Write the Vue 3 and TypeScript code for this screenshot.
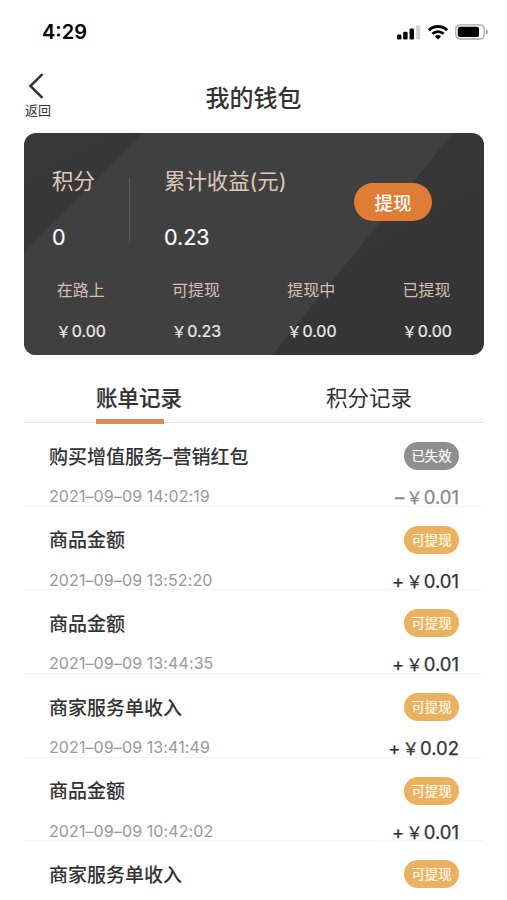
<script setup lang="ts">
interface Stat { label: string; value: string }
interface Bill { title: string; time: string; sign: string; amount: string; status: string; expired?: boolean }

const stats: Stat[] = [
  { label: '在路上', value: '0.00' },
  { label: '可提现', value: '0.23' },
  { label: '提现中', value: '0.00' },
  { label: '已提现', value: '0.00' },
]

const bills: Bill[] = [
  { title: '购买增值服务–营销红包', time: '2021–09–09 14:02:19', sign: '–', amount: '0.01', status: '已失效', expired: true },
  { title: '商品金额', time: '2021–09–09 13:52:20', sign: '+', amount: '0.01', status: '可提现' },
  { title: '商品金额', time: '2021–09–09 13:44:35', sign: '+', amount: '0.01', status: '可提现' },
  { title: '商家服务单收入', time: '2021–09–09 13:41:49', sign: '+', amount: '0.02', status: '可提现' },
  { title: '商品金额', time: '2021–09–09 10:42:02', sign: '+', amount: '0.01', status: '可提现' },
  { title: '商家服务单收入', time: '', sign: '', amount: '', status: '可提现' },
]
</script>

<template>
  <div class="screen">
    <div class="status-bar">
      <span class="clock">4:29</span>
      <div class="indicators">
        <svg class="signal" width="24" height="16" viewBox="0 0 24 16">
          <rect x="0" y="10.4" width="4.4" height="5.2" rx="1.3" />
          <rect x="6.2" y="7.8" width="4.4" height="7.8" rx="1.3" />
          <rect x="12.6" y="4.4" width="4.4" height="11.2" rx="1.3" />
          <rect x="19.2" y="1.2" width="4" height="14.4" rx="1.3" fill="#d2d2d2" />
        </svg>
        <svg class="wifi" width="22" height="16" viewBox="0 0 22 16">
          <path d="M1.9 6.2a13.2 13.2 0 0 1 18.2 0" fill="none" stroke="#000" stroke-width="2.9" />
          <path d="M5.4 9.8a8.2 8.2 0 0 1 11.2 0" fill="none" stroke="#000" stroke-width="2.7" />
          <path d="M11 15.6 7.9 12.5a4.5 4.5 0 0 1 6.2 0Z" />
        </svg>
        <svg class="battery" width="34" height="16" viewBox="0 0 34 16">
          <rect x=".8" y=".8" width="28.4" height="14.2" rx="4.2" fill="#fff" stroke="#a8a8a8" stroke-width="1.3" />
          <rect x="2.8" y="2.7" width="21.2" height="10.4" rx="2.2" />
          <path d="M31 5.3c2.7.8 2.7 4.4 0 5.2Z" fill="#a8a8a8" />
        </svg>
      </div>
    </div>

    <header class="nav">
      <div class="back">
        <svg width="18" height="28" viewBox="0 0 18 28">
          <path d="M15.5 2.2 3.4 14l12.1 11.8" fill="none" stroke="#333" stroke-width="2.5" />
        </svg>
        <span>返回</span>
      </div>
      <h1>我的钱包</h1>
      <div />
    </header>

    <section class="card">
      <svg class="sheen" viewBox="0 0 460 222" preserveAspectRatio="none">
        <path d="M120 0H429L248 222H0V118Z" fill="#404040" />
      </svg>
      <div class="summary">
        <div class="points">
          <div class="label">积分</div>
          <div class="figure">0</div>
        </div>
        <div class="divider" />
        <div class="income">
          <div class="label">累计收益(元)</div>
          <div class="figure">0.23</div>
        </div>
        <button class="withdraw">提现</button>
      </div>
      <div class="stats">
        <div v-for="s in stats" :key="s.label" class="stat">
          <div class="stat-label">{{ s.label }}</div>
          <div class="stat-value"><span class="yen">￥</span>{{ s.value }}</div>
        </div>
      </div>
    </section>

    <nav class="tabs">
      <div class="tab active"><span>账单记录</span></div>
      <div class="tab"><span>积分记录</span></div>
    </nav>

    <ul class="bills">
      <li v-for="(b, i) in bills" :key="i" class="bill">
        <div class="line">
          <span class="title">{{ b.title }}</span>
          <span class="badge" :class="{ expired: b.expired }">{{ b.status }}</span>
        </div>
        <div v-if="b.time" class="line second">
          <span class="time">{{ b.time }}</span>
          <span class="amount" :class="{ expired: b.expired }"><span class="sign">{{ b.sign }}</span><span class="yen">￥</span>{{ b.amount }}</span>
        </div>
      </li>
    </ul>
  </div>
</template>

<style>
body {
  background: #fefefe;
  overflow: hidden;
}
</style>

<style scoped>
.screen {
  width: 507px;
  height: 900px;
  overflow: hidden;
  color: #333;
  font-family: Inter, "Noto Sans CJK SC", sans-serif;
}
.status-bar {
  display: flex;
  justify-content: space-between;
  align-items: center;
  height: 64px;
  padding: 0 18px 0 42px;
  box-sizing: border-box;
}
.clock {
  font-size: 20px;
  font-weight: 600;
  color: #000;
}
.indicators {
  display: flex;
  align-items: center;
}
.wifi { margin: 0 6px; }
.nav {
  display: grid;
  grid-template-columns: 60px 1fr 60px;
  height: 69px;
  padding: 0 8px;
}
.back {
  display: flex;
  flex-direction: column;
  align-items: center;
  padding-top: 8px;
  font-size: 13px;
  line-height: 20px;
}
.back svg { margin-left: -4px; }
h1 {
  margin: 0;
  font-size: 24px;
  font-weight: 500;
  line-height: 69px;
  text-align: center;
}
.card {
  position: relative;
  width: 460px;
  height: 222px;
  margin-left: 24px;
  overflow: hidden;
  border-radius: 12px;
  background: linear-gradient(150deg, #383838, #353535);
}
.sheen {
  position: absolute;
  inset: 0;
  width: 100%;
  height: 100%;
}
.summary {
  position: relative;
  display: flex;
  height: 132px;
  padding: 31px 52px 0 28px;
  box-sizing: border-box;
}
.points { width: 77px; }
.divider {
  width: 1px;
  height: 65px;
  margin: 14px 34px 0 0;
  background: #5a5a5a;
}
.label {
  font-size: 21.4px;
  line-height: 34px;
  color: #dfc8ba;
  white-space: nowrap;
}
.figure {
  margin-top: 22px;
  font-size: 21.5px;
  font-weight: 400;
  -webkit-text-stroke: .2px currentColor;
  line-height: 34px;
  color: #fff;
}
.withdraw {
  width: 78px;
  height: 38px;
  margin: 19px 0 0 auto;
  padding: 0;
  border: 0;
  border-radius: 19px;
  background: #df7c35;
  color: #fff;
  font: 500 18.5px/37px "Noto Sans CJK SC", sans-serif;
}
.stats {
  position: relative;
  display: grid;
  grid-template-columns: repeat(4, 115.3px);
  margin-left: -1px;
  text-align: center;
}
.stat-label {
  padding-top: 12px;
  font-size: 16px;
  line-height: 26px;
  color: #d3bfb4;
}
.stat-value {
  margin-top: 15px;
  padding-left: 1px;
  font-size: 16px;
  font-weight: 400;
  -webkit-text-stroke: .2px currentColor;
  line-height: 26px;
  color: #eee;
}
.stat-value .yen {
  margin-right: 1px;
  font-size: 14.5px;
}
.tabs {
  display: grid;
  grid-template-columns: 1fr 1fr;
  width: 460px;
  height: 68px;
  margin-left: 24px;
  box-sizing: border-box;
  border-bottom: 1px solid #e2e2e2;
}
.tab {
  text-align: center;
  font-size: 21.5px;
  line-height: 86px;
  height: 67px;
}
.active span {
  position: relative;
  font-weight: 500;
  -webkit-text-stroke: .2px currentColor;
}
.active span::after {
  content: "";
  position: absolute;
  left: 0;
  bottom: -13px;
  width: 68px;
  height: 5px;
  background: #d98a55;
}
.bills {
  margin: 0 24px;
  padding: 0;
  list-style: none;
}
.bill {
  height: 83.7px;
  padding: 17px 24px 0 25px;
  box-sizing: border-box;
  border-bottom: 1px solid #f4f4f4;
}
.line {
  display: flex;
  justify-content: space-between;
  align-items: center;
  height: 32px;
}
.second { margin-top: 8px; }
.title {
  margin-top: -2px;
  font-size: 19px;
  font-weight: 500;
}
.badge {
  width: 55px;
  height: 28px;
  border-radius: 14px;
  background: #eab260;
  color: #fff8e9;
  font-size: 13.4px;
  font-weight: 400;
  -webkit-text-stroke: .2px currentColor;
  line-height: 28px;
  text-align: center;
}
.badge.expired { background: #8f8f8f; color: #fff; }
.time {
  font-size: 16px;
  letter-spacing: .1px;
  color: #999;
}
.amount {
  padding-top: 2px;
  font-size: 18.5px;
  font-weight: 400;
  -webkit-text-stroke: .25px currentColor;
}
.amount .yen {
  margin: 0 1px 0 2px;
  font-size: 16.5px;
}
.amount.expired { color: #888; }
</style>
